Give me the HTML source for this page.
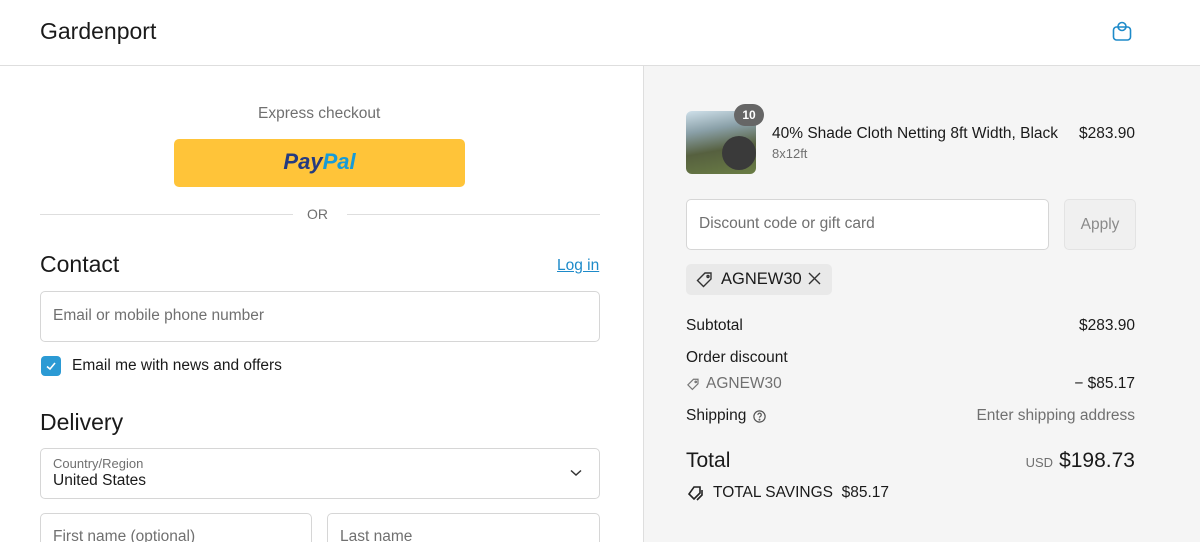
<!DOCTYPE html>
<html style="width:1200px;height:542px;overflow:hidden"><head><style>
*{box-sizing:border-box;margin:0;padding:0}
body{width:1200px;height:542px;overflow:hidden;font-family:"Liberation Sans",sans-serif;color:#1a1a1a;background:#fff;position:relative;font-size:15.5px}
.a{position:absolute;white-space:nowrap}
.hdr{left:0;top:0;width:1200px;height:66px;border-bottom:1px solid #dedede}
.right{left:643px;top:66px;width:557px;height:476px;background:#f5f5f5;border-left:1px solid #dedede}
.inp{border:1px solid #d6d6d6;border-radius:5px;background:#fff}
.ph{color:#707070;font-size:15.5px}
.r{right:65px;text-align:right}
</style></head><body>
<div class="a hdr"></div>
<div class="a" style="left:40px;top:18px;font-size:23px">Gardenport</div>
<svg class="a" style="left:1111px;top:20px" width="22" height="22" viewBox="0 0 22 22" fill="none" stroke="#1d8ac9" stroke-width="1.6"><rect x="2.5" y="7" width="17" height="13" rx="3"/><circle cx="11" cy="6.5" r="4"/></svg>

<div class="a" style="left:258px;top:105px;color:#707070">Express checkout</div>
<div class="a" style="left:174px;top:139px;width:291px;height:48px;background:#ffc439;border-radius:5px;text-align:center;line-height:46px;font-size:22px;font-weight:bold;font-style:italic"><span style="color:#253b80">Pay</span><span style="color:#179bd7">Pal</span></div>
<div class="a" style="left:40px;top:214px;width:253px;border-top:1px solid #dedede"></div>
<div class="a" style="left:347px;top:214px;width:253px;border-top:1px solid #dedede"></div>
<div class="a" style="left:307px;top:206px;font-size:14px;color:#707070">OR</div>

<div class="a" style="left:40px;top:251px;font-size:23px">Contact</div>
<div class="a" style="left:557px;top:257px;color:#1d8ac9;text-decoration:underline">Log in</div>
<div class="a inp" style="left:40px;top:291px;width:560px;height:51px"></div>
<div class="a ph" style="left:53px;top:307px">Email or mobile phone number</div>
<div class="a" style="left:41px;top:356px;width:20px;height:20px;background:#2b9ad4;border-radius:4px"><svg width="20" height="20"><path d="M6 10.5l3 2.5 5-6" stroke="#fff" stroke-width="1.6" fill="none"/></svg></div>
<div class="a" style="left:72px;top:357px">Email me with news and offers</div>

<div class="a" style="left:40px;top:409px;font-size:23px">Delivery</div>
<div class="a inp" style="left:40px;top:448px;width:560px;height:51px"></div>
<div class="a" style="left:53px;top:456px;font-size:13px;color:#707070">Country/Region</div>
<div class="a" style="left:53px;top:472px">United States</div>
<svg class="a" style="left:570px;top:469px" width="12" height="8"><path d="M1 1.5l5 4.5 5-4.5" stroke="#333" stroke-width="1.5" fill="none"/></svg>
<div class="a inp" style="left:40px;top:513px;width:272px;height:51px"></div>
<div class="a ph" style="left:53px;top:528px">First name (optional)</div>
<div class="a inp" style="left:327px;top:513px;width:273px;height:51px"></div>
<div class="a ph" style="left:340px;top:528px">Last name</div>

<div class="a right"></div>
<div class="a" style="left:686px;top:111px;width:70px;height:63px;border-radius:6px;overflow:hidden;background:linear-gradient(170deg,#cfe0ea 0%,#8aa0a8 30%,#56603f 60%,#6a7d45 100%)"><div style="position:absolute;left:36px;top:25px;width:34px;height:34px;border-radius:50%;background:#3a3a3a"></div></div>
<div class="a" style="left:734px;top:104px;width:30px;height:22px;border-radius:11px;background:#666;color:#fff;font-size:12px;font-weight:bold;text-align:center;line-height:22px">10</div>
<div class="a" style="left:772px;top:125px">40% Shade Cloth Netting 8ft Width, Black</div>
<div class="a" style="left:772px;top:146px;font-size:13px;color:#707070">8x12ft</div>
<div class="a r" style="top:125px">$283.90</div>

<div class="a inp" style="left:686px;top:199px;width:363px;height:51px"></div>
<div class="a ph" style="left:699px;top:215px">Discount code or gift card</div>
<div class="a" style="left:1064px;top:199px;width:72px;height:51px;border:1px solid #e3e3e3;border-radius:5px;background:#f0f0f0;color:#8a8a8a;text-align:center;line-height:49px">Apply</div>

<div class="a" style="left:686px;top:264px;width:146px;height:31px;background:#e9e9e9;border-radius:5px"></div>
<svg class="a" style="left:695px;top:270px" width="20" height="20" viewBox="0 0 20 20" fill="none" stroke="#333" stroke-width="1.4"><path d="M10 3h6v6l-7.5 7.5-6-6z"/><circle cx="13" cy="6.5" r="1"/></svg>
<div class="a" style="left:721px;top:270px;font-size:16.5px">AGNEW30</div>
<svg class="a" style="left:808px;top:272px" width="13" height="13"><path d="M1 1l11 11M12 1L1 12" stroke="#333" stroke-width="1.4"/></svg>

<div class="a" style="left:686px;top:317px">Subtotal</div>
<div class="a r" style="top:317px">$283.90</div>
<div class="a" style="left:686px;top:349px">Order discount</div>
<svg class="a" style="left:686px;top:377px" width="15" height="15" viewBox="0 0 20 20" fill="none" stroke="#777" stroke-width="1.6"><path d="M10 3h6v6l-7.5 7.5-6-6z"/><circle cx="13" cy="6.5" r="1"/></svg>
<div class="a" style="left:706px;top:375px;color:#707070">AGNEW30</div>
<div class="a r" style="top:375px">− $85.17</div>
<div class="a" style="left:686px;top:407px">Shipping</div>
<svg class="a" style="left:752px;top:409px" width="15" height="15" viewBox="0 0 16 16" fill="none" stroke="#555" stroke-width="1.3"><circle cx="8" cy="8" r="6"/><path d="M6.3 6.3a1.8 1.8 0 113 1.3c-.8.5-1.3.8-1.3 1.6"/><circle cx="8" cy="11.3" r=".4" fill="#555"/></svg>
<div class="a r" style="top:407px;color:#707070">Enter shipping address</div>
<div class="a" style="left:686px;top:449px;font-size:21px">Total</div>
<div class="a r" style="top:449px;font-size:21px"><span style="font-size:13px;color:#707070;margin-right:6px">USD</span>$198.73</div>
<svg class="a" style="left:686px;top:485px" width="20" height="17" viewBox="0 0 20 17" fill="none" stroke="#222" stroke-width="1.6"><path d="M8 2h6v6l-6 6-5-5z"/><path d="M16 5v5l-5 5"/></svg>
<div class="a" style="left:713px;top:484px">TOTAL SAVINGS&nbsp; $85.17</div>
</body></html>
